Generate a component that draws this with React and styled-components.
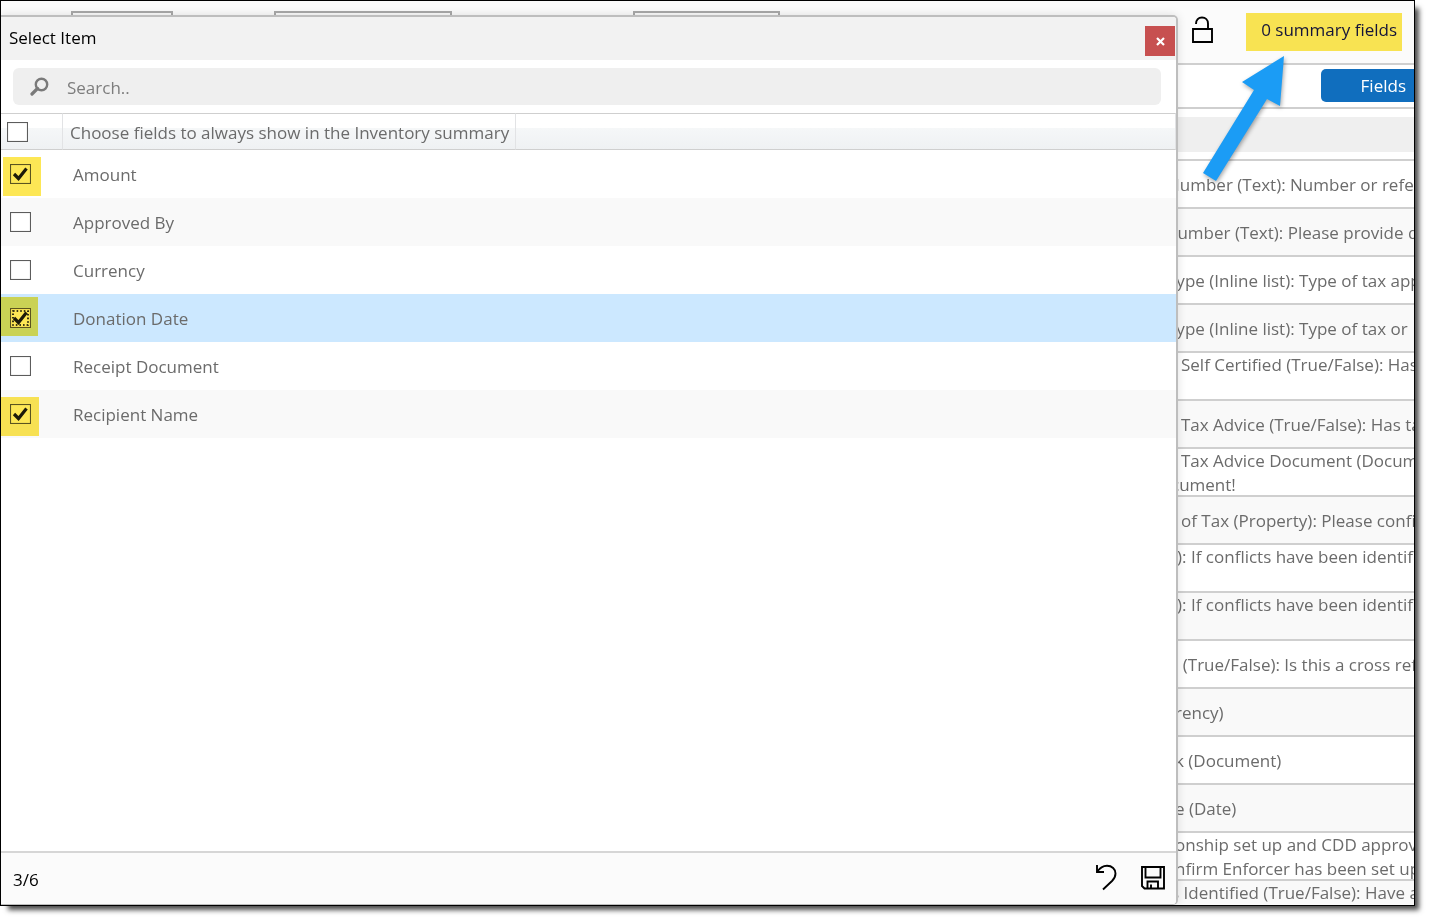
import React, { useState } from "react";
import styled, { createGlobalStyle } from "styled-components";

const FIELDS = [
  { id: "amount", label: "Amount", mark: { x: 2, y: 7 } },
  { id: "approvedBy", label: "Approved By" },
  { id: "currency", label: "Currency" },
  { id: "donationDate", label: "Donation Date", mark: { x: -1, y: 3 } },
  { id: "receiptDocument", label: "Receipt Document" },
  { id: "recipientName", label: "Recipient Name", mark: { x: 0, y: 7 } },
];

// indent is how far the visible part of the text starts from the pane edge
const PROPERTIES = [
  { lines: ["Number (Text): Number or refere"], indent: 0 },
  { lines: ["number (Text): Please provide d"], indent: 0 },
  { lines: ["Type (Inline list): Type of tax app"], indent: 0 },
  { lines: ["Type (Inline list): Type of tax or"], indent: 0 },
  { lines: ["Self Certified (True/False): Has", ""], indent: 14 },
  { lines: ["Tax Advice (True/False): Has tax"], indent: 14 },
  { lines: ["Tax Advice Document (Docum", "cument!"], indent: 14, hang: true },
  { lines: ["of Tax (Property): Please confir"], indent: 14 },
  { lines: ["t): If conflicts have been identifi", ""], indent: 4 },
  { lines: ["t): If conflicts have been identifi", ""], indent: 4 },
  { lines: ["? (True/False): Is this a cross refe"], indent: 4 },
  { lines: ["rency)"], indent: 8 },
  { lines: ["k (Document)"], indent: 8 },
  { lines: ["e (Date)"], indent: 8 },
  { lines: ["onship set up and CDD approv", "nfirm Enforcer has been set up"], indent: 8 },
  { lines: ["s Identified (True/False): Have a", ""], indent: 4 },
];

const SearchIcon = () => (
  <svg width="20" height="20" viewBox="0 0 20 20" fill="none" stroke="#7a7a7a">
    <circle cx="11.500" cy="7.500" r="5.700" strokeWidth="2.400" />
    <path d="M7.500 11.500L2 17" strokeWidth="3.200" strokeLinecap="round" />
  </svg>
);

const LockIcon = () => (
  <svg width="22" height="28" viewBox="0 0 22 28" fill="none" stroke="#000" strokeWidth="1.900">
    <path d="M2 13H21V26H2Z" />
    <path d="M5 8C5 3.800 7.500 1.500 11 1.500S17 3.800 17 7.500V13" />
  </svg>
);

const UndoIcon = () => (
  <svg width="22" height="28" viewBox="0 0 22 28" fill="none" stroke="#000" strokeWidth="1.900">
    <path d="M2 1V8H9" />
    <path d="M2 8C5 3.500 8 1.800 12 1.800C17 1.800 20.500 5 20.500 9.500C20.500 12.500 19.500 14.500 17 17L8 25.500" />
  </svg>
);

const SaveIcon = () => (
  <svg width="24" height="24" viewBox="0 0 24 24" fill="none" stroke="#000" strokeWidth="1.900">
    <path d="M1 1H23V22.500H3.500L1 20Z" />
    <path d="M4.500 1V11.500H19.500V1" />
    <path d="M6.500 22V15.500H17V22" />
    <path d="M10 22.500V18.500" />
  </svg>
);

const TickIcon = () => (
  <svg width="21" height="20" viewBox="0 0 21 20" fill="none" stroke="#1c1c1c">
    <path d="M4 10L8.500 14.500L16.500 4.500" strokeWidth="3.200" />
  </svg>
);

const FocusRing = () => (
  <svg width="21" height="20" viewBox="0 0 21 20" fill="none" stroke="#000">
    <rect x="3" y="3" width="15" height="14" strokeWidth="1.600" strokeDasharray="1.600 2" />
  </svg>
);

const Check = ({ id, label, checked, focused, onChange }) => (
  <CheckWrap>
    <CheckInput
      id={id}
      type="checkbox"
      aria-label={label}
      checked={checked}
      onChange={onChange}
    />
    {focused && <FocusRing />}
    {checked && <TickIcon />}
  </CheckWrap>
);

const App = () => {
  const [selected, setSelected] = useState(["amount", "donationDate", "recipientName"]);
  const [active, setActive] = useState("donationDate");
  const [query, setQuery] = useState("");

  const toggle = (id) => {
    setActive(id);
    setSelected((prev) =>
      prev.includes(id) ? prev.filter((item) => item !== id) : [...prev, id]
    );
  };

  const toggleAll = () => {
    setSelected(selected.length === FIELDS.length ? [] : FIELDS.map((f) => f.id));
  };

  const visible = FIELDS.filter((f) =>
    f.label.toLowerCase().includes(query.toLowerCase())
  );

  return (
    <>
      <GlobalStyle />
      <Frame>
        <Page>
          <TopBar>
            <Boxes>
              <Box $width={102} />
              <Box $width={178} />
              <Box $width={147} />
            </Boxes>
            <IconButton aria-label="Lock">
              <LockIcon />
            </IconButton>
            <Summary href="#summary">0 summary fields</Summary>
          </TopBar>
          <TabBar>
            <TabButton>Fields</TabButton>
          </TabBar>
          <Band />
          <PropertyList>
            {PROPERTIES.map((item, i) => (
              <Property key={i}>
                {item.lines.map((line, n) => (
                  <Line key={n} $indent={item.hang && n > 0 ? 4 : item.indent}>
                    {line}
                  </Line>
                ))}
              </Property>
            ))}
          </PropertyList>
        </Page>

        <Dialog role="dialog" aria-labelledby="dialogTitle">
          <DialogHeader>
            <Title id="dialogTitle">Select Item</Title>
            <CloseButton aria-label="Close">
              <svg width="9" height="9" viewBox="0 0 9 9" stroke="#fff" strokeWidth="2.200">
                <path d="M1 1L8 8M8 1L1 8" />
              </svg>
            </CloseButton>
          </DialogHeader>
          <SearchBar>
            <SearchIcon />
            <SearchInput
              type="text"
              aria-label="Search"
              placeholder="Search.."
              value={query}
              onChange={(e) => setQuery(e.target.value)}
            />
          </SearchBar>
          <TableArea>
            <Table>
              <thead>
                <tr>
                  <HeadCell $width="62px">
                    <Check
                      id="all"
                      label="Select all"
                      checked={selected.length === FIELDS.length}
                      onChange={toggleAll}
                    />
                  </HeadCell>
                  <HeadCell $width="453px">
                    Choose fields to always show in the Inventory summary
                  </HeadCell>
                  <HeadCell />
                </tr>
              </thead>
              <tbody>
                {visible.map((field) => (
                  <Row key={field.id} $active={field.id === active}>
                    <Cell>
                      <Check
                        id={field.id}
                        checked={selected.includes(field.id)}
                        focused={field.id === active}
                        onChange={() => toggle(field.id)}
                      />
                      {field.mark && <Marker $x={field.mark.x} $y={field.mark.y} />}
                    </Cell>
                    <Cell colSpan={2}>
                      <label htmlFor={field.id}>{field.label}</label>
                    </Cell>
                  </Row>
                ))}
              </tbody>
            </Table>
          </TableArea>
          <DialogFooter>
            <Count>
              {selected.length}/{FIELDS.length}
            </Count>
            <IconButton aria-label="Undo">
              <UndoIcon />
            </IconButton>
            <IconButton aria-label="Save">
              <SaveIcon />
            </IconButton>
          </DialogFooter>
        </Dialog>

        <Arrow width="100" height="140" viewBox="0 0 100 140">
          <path d="M94 5L90 55L77 48L26 130L13 122L64 39L52 31Z" fill="#1b9cf5" />
        </Arrow>
      </Frame>
    </>
  );
};

export default App;

const GlobalStyle = createGlobalStyle`
  * {
    box-sizing: border-box;
  }
  body {
    min-height: 100vh;
    margin: 0;
    background: #ffffff;
    color: #6b6b6b;
    font-family: "Open Sans", "Noto Sans", sans-serif;
    font-size: 17px;
    line-height: 24px;
  }
  button, input {
    font: inherit;
  }
`;

const Frame = styled.div`
  position: relative;
  height: calc(100vh - 15px);
  margin-right: 15px;
  overflow: hidden;
  border: 1px solid #000000;
  background: #ffffff;
  box-shadow: 6px 6px 5px -2px rgba(0, 0, 0, 0.7);
`;

const Page = styled.div`
  display: flex;
  flex-direction: column;
`;

const TopBar = styled.div`
  display: flex;
  align-items: flex-start;
  height: 64px;
  padding: 12px 12px 0 70px;
  background: #fbfbfb;
  border-bottom: 2px solid #cfcfcf;
`;

const Boxes = styled.div`
  display: grid;
  grid-template-columns: 203px 359px auto;
  flex: 1;
  margin-top: -2px;
`;

const Box = styled.div`
  width: ${({ $width }) => $width}px;
  height: 40px;
  border: 2px solid #a9a9a9;
`;

const IconButton = styled.button`
  display: flex;
  align-items: center;
  justify-content: center;
  padding: 3px 0 5px;
  border: none;
  background: none;
  cursor: pointer;
`;

const Summary = styled.a`
  height: 38px;
  margin-left: 33px;
  padding: 5px 5px 0 15px;
  background: #f8e352;
  color: #14143a;
  text-decoration: none;
  white-space: nowrap;
`;

const TabBar = styled.div`
  display: flex;
  justify-content: flex-end;
  height: 44px;
  padding-top: 4px;
  border-bottom: 2px solid #cfcfcf;
`;

const TabButton = styled.button`
  width: 93px;
  height: 33px;
  padding: 0 8px 0 0;
  border: none;
  border-radius: 5px 0 0 5px;
  background: #106ebe;
  color: #ffffff;
  text-align: right;
`;

const Band = styled.div`
  height: 35px;
  margin: 8px 0 7px;
  background: #efefef;
`;

const PropertyList = styled.div`
  border-top: 2px solid #cfcfcf;
`;

const Property = styled.div`
  display: flex;
  flex-direction: column;
  justify-content: center;
  height: 48px;
  padding-top: 2px;
  padding-left: calc(100% - 247px);
  border-bottom: 2px solid #cfcfcf;
  white-space: nowrap;
  &:nth-child(even) {
    background: #f9f9f9;
  }
`;

const Line = styled.span`
  flex: none;
  height: 24px;
  padding-left: ${({ $indent }) => $indent}px;
`;

const Dialog = styled.section`
  position: absolute;
  top: 14px;
  right: 236px;
  bottom: 0;
  left: 0;
  display: flex;
  flex-direction: column;
  overflow: hidden;
  border: 2px solid #bebebe;
  border-width: 2px 2px 1px 0;
  border-radius: 0 5px 5px 0;
  background: #ffffff;
  box-shadow: 0 0 10px rgba(0, 0, 0, 0.12);
`;

const DialogHeader = styled.header`
  display: flex;
  justify-content: space-between;
  height: 43px;
  background: #f2f2f2;
`;

const Title = styled.h1`
  margin: 0;
  padding: 9px 8px;
  color: #000000;
  font-size: 17px;
  font-weight: 400;
  line-height: 24px;
`;

const CloseButton = styled.button`
  display: flex;
  align-items: center;
  justify-content: center;
  width: 30px;
  height: 30px;
  margin: 9px 1px 0 0;
  padding: 0;
  border: none;
  background: #c75050;
`;

const SearchBar = styled.div`
  display: flex;
  align-items: center;
  height: 37px;
  margin: 8px 15px 8px 12px;
  padding-left: 17px;
  border-radius: 6px;
  background: #efefef;
`;

const SearchInput = styled.input`
  flex: 1;
  margin-left: 17px;
  padding: 2px 0 0;
  border: none;
  outline: none;
  background: none;
  color: #333333;
  &::placeholder {
    color: #7d7d7d;
    opacity: 1;
  }
`;

const TableArea = styled.div`
  flex: 1;
  overflow: hidden;
`;

const Table = styled.table`
  width: 100%;
  table-layout: fixed;
  border-collapse: separate;
  border-spacing: 0;
`;

const HeadCell = styled.th`
  width: ${({ $width }) => $width || "auto"};
  height: 37px;
  padding: 2px 0 0 7px;
  border-top: 1px solid #cfcfcf;
  border-bottom: 1px solid #cfcfcf;
  border-right: 1px solid #e2e3e5;
  background: linear-gradient(#ffffff 40%, #f5f7f8 41%, #eff1f3);
  font-weight: 400;
  text-align: left;
  white-space: nowrap;
  &:first-child {
    padding: 0 0 0 6px;
  }
`;

const Row = styled.tr`
  &:nth-child(even) {
    background: #f9f9f9;
  }
  &&& {
    ${({ $active }) => $active && "background: #cce8ff;"}
  }
`;

const Cell = styled.td`
  position: relative;
  height: 48px;
  padding: 2px 0 0 10px;
  &:first-child {
    padding: 0 0 0 9px;
  }
`;

const CheckWrap = styled.span`
  display: grid;
  width: 21px;
  height: 20px;
  > * {
    grid-area: 1 / 1;
    pointer-events: none;
  }
  > input {
    pointer-events: auto;
  }
`;

const CheckInput = styled.input`
  appearance: none;
  width: 21px;
  height: 20px;
  margin: 0;
  border: 1px solid #5c5c5c;
  background: #ffffff;
  box-shadow: inset 0 0 1px #8a8a8a;
`;

// translucent highlighter stroke over a ticked box
const Marker = styled.span`
  position: absolute;
  top: ${({ $y }) => $y}px;
  left: ${({ $x }) => $x}px;
  width: 38px;
  height: 39px;
  background: #fde755;
  mix-blend-mode: multiply;
  pointer-events: none;
`;

const DialogFooter = styled.footer`
  display: flex;
  align-items: center;
  gap: 24px;
  height: 53px;
  padding: 0 11px 0 12px;
  border-top: 2px solid #d6d6d6;
  background: #fbfbfb;
`;

const Count = styled.span`
  flex: 1;
  padding-top: 2px;
  color: #000000;
`;

const Arrow = styled.svg`
  position: absolute;
  top: 50px;
  right: 124px;
  filter: drop-shadow(1px 2px 2px rgba(0, 0, 0, 0.35));
  pointer-events: none;
`;
